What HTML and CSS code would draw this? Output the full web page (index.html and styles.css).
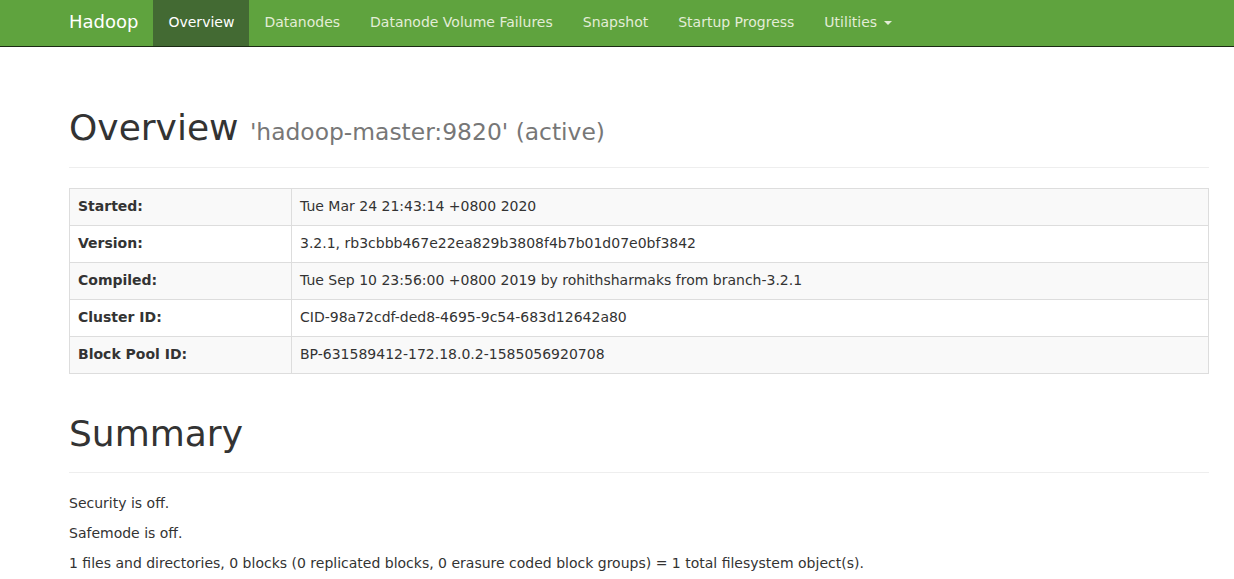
FILE: index.html
```html
<!DOCTYPE html>
<html>
<head>
<meta charset="utf-8">
<title>Namenode information</title>
<link rel="stylesheet" href="styles.css">
</head>
<body>
<header class="navbar">
  <div class="container nav-inner">
    <a class="brand" href="#">Hadoop</a>
    <ul class="nav">
      <li class="active"><a href="#">Overview</a></li>
      <li><a href="#">Datanodes</a></li>
      <li><a href="#">Datanode Volume Failures</a></li>
      <li><a href="#">Snapshot</a></li>
      <li><a href="#">Startup Progress</a></li>
      <li><a href="#">Utilities <span class="caret"></span></a></li>
    </ul>
  </div>
</header>
<main class="container main">
  <div class="page-header"><h1>Overview <small>'hadoop-master:9820' (active)</small></h1></div>
  <table class="info">
    <tbody>
      <tr><th>Started:</th><td>Tue Mar 24 21:43:14 +0800 2020</td></tr>
      <tr><th>Version:</th><td>3.2.1, rb3cbbb467e22ea829b3808f4b7b01d07e0bf3842</td></tr>
      <tr><th>Compiled:</th><td>Tue Sep 10 23:56:00 +0800 2019 by rohithsharmaks from branch-3.2.1</td></tr>
      <tr><th>Cluster ID:</th><td>CID-98a72cdf-ded8-4695-9c54-683d12642a80</td></tr>
      <tr><th>Block Pool ID:</th><td>BP-631589412-172.18.0.2-1585056920708</td></tr>
    </tbody>
  </table>
  <div class="page-header"><h1>Summary</h1></div>
  <p>Security is off.</p>
  <p>Safemode is off.</p>
  <p>1 files and directories, 0 blocks (0 replicated blocks, 0 erasure coded block groups) = 1 total filesystem object(s).</p>
</main>
</body>
</html>
```
FILE: styles.css
```css
* { box-sizing: border-box; }
html, body { margin: 0; padding: 0; }
body {
  font-family: "DejaVu Sans", "Helvetica Neue", Helvetica, Arial, sans-serif;
  font-size: 14px;
  line-height: 20px;
  color: #333;
  background: #fff;
}
.container {
  width: 1170px;
  margin-left: 54px;
  padding: 0 15px;
}
.navbar {
  background: #5fa33e;
  height: 47px;
  border-bottom: 1px solid #1b2a14;
}
.nav-inner {
  display: flex;
  align-items: stretch;
  height: 46px;
}
.brand {
  margin-left: -15px;
  padding: 12px 15px 14px;
  font-size: 18px;
  line-height: 20px;
  color: #fff;
  text-decoration: none;
}
.nav {
  display: flex;
  list-style: none;
  margin: 0;
  padding: 0;
}
.nav li a {
  display: block;
  padding: 12px 15px 14px;
  height: 46px;
  line-height: 20px;
  color: #e3edd7;
  text-decoration: none;
}
.nav li.active a {
  background: #436a33;
  color: #fff;
}
.caret {
  display: inline-block;
  width: 0;
  height: 0;
  margin-left: 2px;
  vertical-align: middle;
  border-top: 4px solid #e3edd7;
  border-left: 4px solid transparent;
  border-right: 4px solid transparent;
}
.main { padding-top: 21px; }
.page-header {
  margin: 40px 0 20px;
  padding-bottom: 9px;
  border-bottom: 1px solid #eee;
}
h1 {
  margin: 0 0 10px;
  font-size: 36px;
  line-height: 1.1;
  font-weight: 500;
  color: #333;
}
h1 small {
  font-size: 65%;
  font-weight: 400;
  color: #777;
}
.info {
  width: 100%;
  border-collapse: collapse;
  border: 1px solid #ddd;
  margin-bottom: 20px;
}
.info th, .info td {
  border: 1px solid #ddd;
  padding: 7px 8px 9px;
  line-height: 20px;
  text-align: left;
  vertical-align: top;
}
.info th { width: 222px; font-weight: bold; }
.info tr:nth-child(odd) { background: #f9f9f9; }
p { margin: 0 0 10px; }
```
